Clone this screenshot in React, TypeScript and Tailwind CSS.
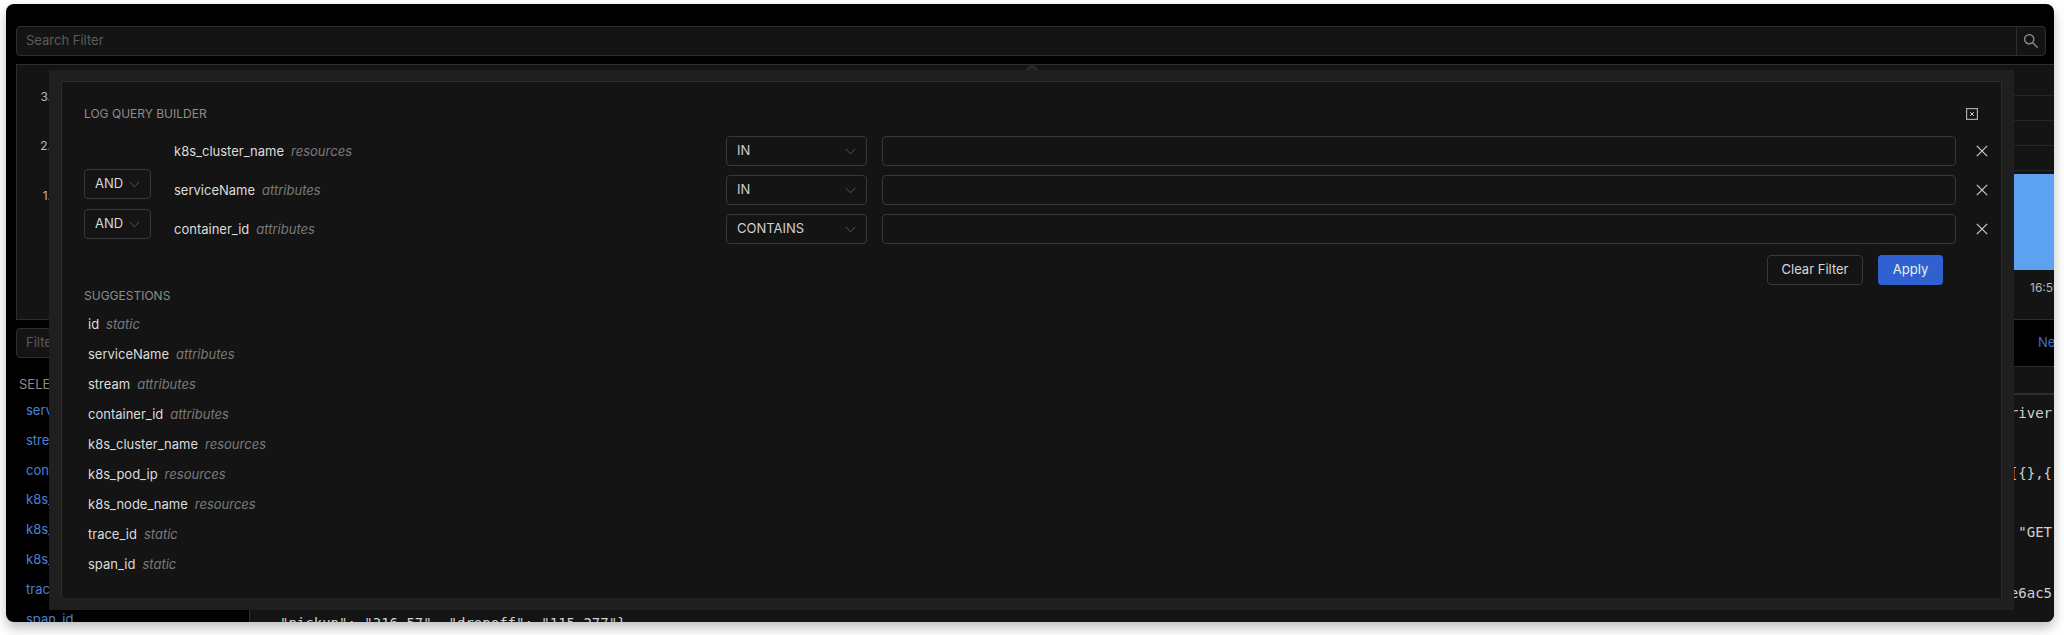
import React from 'react';
import { AiOutlineSearch } from 'react-icons/ai';

const sans = "font-['Inter',sans-serif]";

const rows = [
  { name: 'k8s_cluster_name', type: 'resources', op: 'IN', and: false, andClass: '' },
  { name: 'serviceName', type: 'attributes', op: 'IN', and: true, andClass: '-mt-[6px]' },
  { name: 'container_id', type: 'attributes', op: 'CONTAINS', and: true, andClass: '-mt-[5px]' },
];

const suggestions = [
  { name: 'id', type: 'static' },
  { name: 'serviceName', type: 'attributes' },
  { name: 'stream', type: 'attributes' },
  { name: 'container_id', type: 'attributes' },
  { name: 'k8s_cluster_name', type: 'resources' },
  { name: 'k8s_pod_ip', type: 'resources' },
  { name: 'k8s_node_name', type: 'resources' },
  { name: 'trace_id', type: 'static' },
  { name: 'span_id', type: 'static' },
];

const selected = ['serviceName', 'stream', 'container_id', 'k8s_cluster_name', 'k8s_pod_ip', 'k8s_node_name', 'trace_id', 'span_id'];

const logLines = [
  { text: '"driver', cls: 'h-[60px]' },
  { text: '[{},{', cls: 'h-[59px]' },
  { text: ' "GET', cls: 'h-[61px]' },
  { text: 'e6ac5', cls: 'h-[60px]' },
];

const Chevron = () => (
  <svg width="11" height="7" viewBox="0 0 11 7" fill="none" className="shrink-0 text-[#555555]">
    <path d="M0.7 0.8l4.8 5 4.8-5" stroke="currentColor" strokeWidth="1" />
  </svg>
);

const Cross = () => (
  <svg width="12" height="12" viewBox="0 0 12 12" fill="none" className="text-[#d4d4d4]">
    <path d="M0.8 0.8l10.4 10.4M11.2 0.8L0.8 11.2" stroke="currentColor" strokeWidth="1.1" />
  </svg>
);

const Field = ({ name, type }: { name: string; type: string }) => (
  <div className="flex items-center gap-[7px] text-[13px] leading-5">
    <span className="text-[#dcdcdc]">{name}</span>
    <span className="italic text-[#7a7a7a]">{type}</span>
  </div>
);

export default function App() {
  return (
    <div className={`h-[635px] w-[2064px] overflow-hidden bg-white pt-[4px] pl-[6px] pr-[10px] pb-[13px] ${sans}`}>
      <div className="relative flex h-full flex-col overflow-hidden rounded-lg bg-black shadow-[0_6px_12px_rgba(0,0,0,0.25)]">
        {/* Search bar */}
        <div className="mt-[22px] ml-[10px] mr-[8px] flex h-[30px] rounded-sm border border-[#2e2e2e] bg-[#141414]">
          <div className="flex flex-1 items-center pl-[9px] text-[13px] text-[#5c5c5c]">Search Filter</div>
          <div className="flex w-[29px] items-center justify-center border-l border-[#2e2e2e] text-[#8a8a8a]">
            <AiOutlineSearch size={18} />
          </div>
        </div>

        {/* Chart behind the modal */}
        <div className="mt-[8px] ml-[10px] flex h-[256px] flex-col border-t border-l border-b border-[#2e2e2e] bg-[#141414]">
          <div className="flex">
            <div className="flex w-[34px] flex-col pt-[24px] text-right text-[12px] leading-4 text-[#b8b8b8]">
              <span className="h-[49px]">3.</span>
              <span className="h-[50px]">2.</span>
              <span>1.</span>
            </div>
            <div className="flex-1">
              <div className="h-[31px] border-b border-[#262626]" />
              <div className="h-[25px] border-b border-[#262626]" />
              <div className="h-[25px] border-b border-[#262626]" />
              <div className="h-[25px] border-b border-[#262626]" />
              <div className="mt-[3px] ml-auto h-[96px] w-[40px] bg-[#5ba3f0]" />
              <div className="mt-[10px] flex justify-end text-[12px] leading-4 text-[#b8b8b8]">
                <span className="w-[24px] overflow-hidden whitespace-nowrap">16:59</span>
              </div>
            </div>
          </div>
        </div>

        {/* Filter row and tabs */}
        <div className="flex h-[46px] items-center">
          <div className="ml-[10px] flex h-[30px] w-[234px] items-center rounded-sm border border-[#2e2e2e] bg-[#141414] pl-[9px] text-[13px] text-[#5c5c5c]">
            Filter
          </div>
          <div className="ml-auto flex items-center whitespace-nowrap text-[13px] text-[#3f6fc4]">
            <span className="w-[16px] overflow-hidden">Next</span>
          </div>
        </div>

        <div className="flex min-h-0 flex-1">
          {/* Selected fields */}
          <div className="w-[244px] shrink-0 border-r border-[#2e2e2e] pl-[13px] pt-[8px] text-[13px]">
            <div className="h-[26px] leading-5 text-[#8a8a8a]">SELECTED FIELDS</div>
            <div className="flex flex-col pl-[7px] text-[#4a80d8]">
              {selected.map(name => (
                <div key={name} className="h-[29.8px] leading-5">{name}</div>
              ))}
            </div>
          </div>

          {/* Log lines */}
          <div className="min-w-0 flex-1 bg-[#141414]">
            <div className="h-[29px] border-t border-b-2 border-[#2e2e2e]" />
            <div className="flex flex-col items-end pt-[8px] pr-[2px] font-['DejaVu_Sans_Mono',monospace] text-[14px] leading-5 whitespace-pre text-[#d0d0d0]">
              {logLines.map(line => (
                <div key={line.text} className={line.cls}>{line.text}</div>
              ))}
            </div>
          </div>
        </div>

        <div className="absolute bottom-[-11px] left-[274px] font-['DejaVu_Sans_Mono',monospace] text-[14px] leading-5 whitespace-pre text-[#d0d0d0]">
          {'"pickup": "316.57", "dropoff": "115.277"}'}
        </div>

        {/* Query builder overlay */}
        <div className="absolute top-[66px] right-[40px] bottom-[12px] left-[43px] bg-[#1f1f1f] px-[12px] pt-[11px] pb-[12px]">
          <div className="absolute -top-[7px] left-[976px] h-0 w-0 border-x-[7px] border-b-[7px] border-x-transparent border-b-[#262626]" />
          <div className="flex h-full flex-col border-x border-t border-[#2c2c2c] bg-[#141414] pt-[22px] pl-[22px]">
            <div className="flex h-5 items-center justify-between pr-[23px]">
              <span className="text-[12px] text-[#8c8c8c]">LOG QUERY BUILDER</span>
              <svg width="12" height="12" viewBox="0 0 12 12" fill="none" className="text-[#a8a8a8]">
                <rect x="0.6" y="0.6" width="10.8" height="10.8" stroke="currentColor" strokeWidth="1.2" />
                <path d="M4.2 4.2l3.6 3.6M7.8 4.2l-3.6 3.6" stroke="#d8d8d8" strokeWidth="1" />
              </svg>
            </div>

            <div className="mt-[12px] flex flex-col gap-[9px]">
              {rows.map(row => (
                <div key={row.name} className="flex h-[30px] items-start">
                  <div className="w-[90px] shrink-0">
                    {row.and && (
                      <div className={`flex h-[30px] w-[67px] items-center gap-[6px] rounded-sm border border-[#383838] pl-[10px] text-[13px] text-[#d8d8d8] ${row.andClass}`}>
                        AND
                        <Chevron />
                      </div>
                    )}
                  </div>
                  <div className="flex h-[30px] w-[552px] shrink-0 items-center">
                    <Field name={row.name} type={row.type} />
                  </div>
                  <div className="flex h-[30px] w-[141px] shrink-0 items-center justify-between rounded-sm border border-[#383838] pr-[10px] pl-[10px] text-[13px] text-[#d0d0d0]">
                    {row.op}
                    <Chevron />
                  </div>
                  <div className="ml-[15px] h-[30px] flex-1 rounded-sm border border-[#383838]" />
                  <div className="flex h-[30px] w-[45px] shrink-0 items-center pl-[20px]">
                    <Cross />
                  </div>
                </div>
              ))}
            </div>

            <div className="mt-[11px] mr-[58px] flex justify-end gap-[15px]">
              <div className="flex h-[30px] w-[96px] items-center justify-center rounded-sm border border-[#383838] text-[13px] text-[#d8d8d8]">
                Clear Filter
              </div>
              <div className="flex h-[30px] w-[65px] items-center justify-center rounded-sm bg-[#2f62d0] text-[13px] text-[#eeeeee]">
                Apply
              </div>
            </div>

            <div className="mt-px h-5 text-[12px] leading-5 text-[#8c8c8c]">SUGGESTIONS</div>
            <div className="mt-[3px] flex flex-col pl-[4px]">
              {suggestions.map(item => (
                <div key={item.name} className="flex h-[30px] items-center">
                  <Field name={item.name} type={item.type} />
                </div>
              ))}
            </div>
          </div>
        </div>
      </div>
    </div>
  );
}
